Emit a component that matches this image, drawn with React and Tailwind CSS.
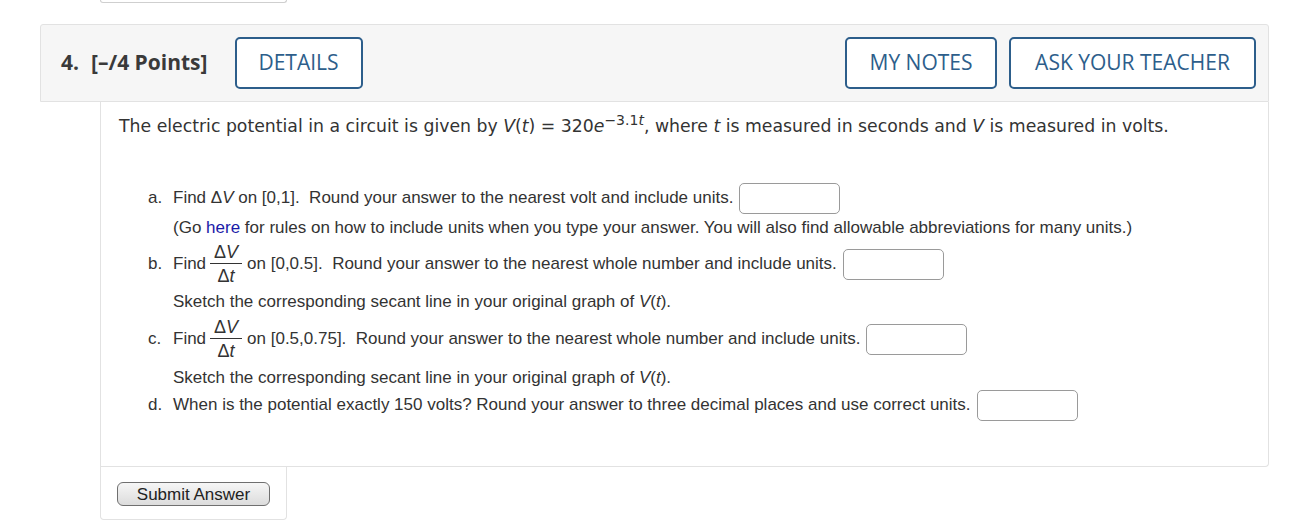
import React from "react";

const sans = { fontFamily: '"Open Sans", "DejaVu Sans", sans-serif' };

function HeaderButton({ children, className = "" }) {
  return (
    <button
      type="button"
      className={`h-[52px] rounded-[5px] border-2 border-[#2d5e8b] bg-white text-[21px] font-medium text-[#2d5e8b] ${className}`}
    >
      {children}
    </button>
  );
}

function AnswerBox() {
  return <input type="text" className="ml-[6px] h-[31px] w-[101px] shrink-0 rounded-[5px] border border-[#9a9a9a] bg-white outline-none" />;
}

// ΔV / Δt stacked fraction
function Frac() {
  return (
    <span className="ml-[4px] mr-[5px] inline-flex flex-col items-center leading-none">
      <span className="px-[1px] pb-[2px] text-[18px]">
        Δ<i>V</i>
      </span>
      <span className="h-[1.5px] w-[32px] bg-[#333]" />
      <span className="pt-[3px] text-[18px]">
        Δ<i>t</i>
      </span>
    </span>
  );
}

function Row({ label, h, children }) {
  return (
    <div className={`flex items-center whitespace-nowrap ${h}`}>
      <span className="w-[25px] shrink-0">{label}</span>
      {children}
    </div>
  );
}

export default function App() {
  return (
    <div className="h-[525px] w-full overflow-hidden bg-white">
      {/* tail of the previous question's submit box */}
      <div className="ml-[100px] h-[3px] w-[187px] rounded-b-[4px] border-x border-b border-[#cfcfcf]" />

      {/* question header */}
      <div
        className="ml-[40px] mt-[21px] flex h-[78px] w-[1229px] items-center rounded-t-[3px] border border-[#e2e2e2] bg-[#f6f6f6] pl-[20px] pr-[12px]"
        style={sans}
      >
        <span className="text-[21px] font-bold text-[#3a3a3a]">4.</span>
        <span className="ml-[12px] text-[21px] font-bold text-[#3a3a3a]">[–/4 Points]</span>
        <HeaderButton className="ml-[27px] w-[128px]">DETAILS</HeaderButton>
        <div className="ml-auto flex gap-[12px]">
          <HeaderButton className="w-[152px]">MY NOTES</HeaderButton>
          <HeaderButton className="w-[247px]">ASK YOUR TEACHER</HeaderButton>
        </div>
      </div>

      {/* question body */}
      <div className="ml-[100px] h-[365px] w-[1169px] rounded-br-[4px] border-x border-b border-[#e2e2e2] pl-[18px]">
        <p
          className="pt-[10px] text-[17.3px] leading-[28px] text-[#333]"
          style={{ fontFamily: '"DejaVu Sans", Verdana, sans-serif' }}
        >
          The electric potential in a circuit is given by <i>V</i>(<i>t</i>) = 320<i>e</i>
          <sup className="relative top-[-7px] text-[14px]">
            −3.1<i>t</i>
          </sup>
          , where <i>t</i> is measured in seconds and <i>V</i> is measured in volts.
        </p>

        <div
          className="ml-[29px] mt-[42px] text-[17px] text-[#333]"
          style={{ fontFamily: '"Liberation Sans", Arial, sans-serif' }}
        >
          <Row label="a." h="h-[32px]">
            Find Δ<i>V</i>&nbsp;on [0,1].&nbsp; Round your answer to the nearest volt and include units.
            <AnswerBox />
          </Row>
          <div className="mt-[1px] flex h-[26px] items-center whitespace-nowrap pl-[25px]">
            (Go&nbsp;<span className="text-[#1a1aa8]">here</span>&nbsp;for rules on how to include units when you type your answer. You will also find allowable abbreviations for many units.)
          </div>
          <Row label="b." h="h-[46px]">
            Find
            <Frac />
            on [0,0.5].&nbsp; Round your answer to the nearest whole number and include units.
            <AnswerBox />
          </Row>
          <div className="mt-[2px] flex h-[26px] items-center pl-[25px]">
            Sketch the corresponding secant line in your original graph of&nbsp;<i>V</i>(<i>t</i>).
          </div>
          <Row label="c." h="mt-[1px] h-[46px]">
            Find
            <Frac />
            on [0.5,0.75].&nbsp; Round your answer to the nearest whole number and include units.
            <AnswerBox />
          </Row>
          <div className="mt-[4px] flex h-[24px] items-center pl-[25px]">
            Sketch the corresponding secant line in your original graph of&nbsp;<i>V</i>(<i>t</i>).
          </div>
          <Row label="d." h="-mt-[1px] h-[32px]">
            When is the potential exactly 150 volts? Round your answer to three decimal places and use correct units.
            <AnswerBox />
          </Row>
        </div>
      </div>

      {/* submit */}
      <div className="ml-[100px] flex h-[53px] w-[187px] items-center rounded-b-[4px] border-x border-b border-[#e2e2e2] pl-[16px] pt-[2px]">
        <button
          type="button"
          className="h-[24px] w-[153px] rounded-[6px] border border-[#6f6f6f] bg-gradient-to-b from-[#f6f6f6] to-[#dcdcdc] text-[17px] leading-none text-[#222]"
          style={{ fontFamily: '"Liberation Sans", Arial, sans-serif' }}
        >
          Submit Answer
        </button>
      </div>
    </div>
  );
}
